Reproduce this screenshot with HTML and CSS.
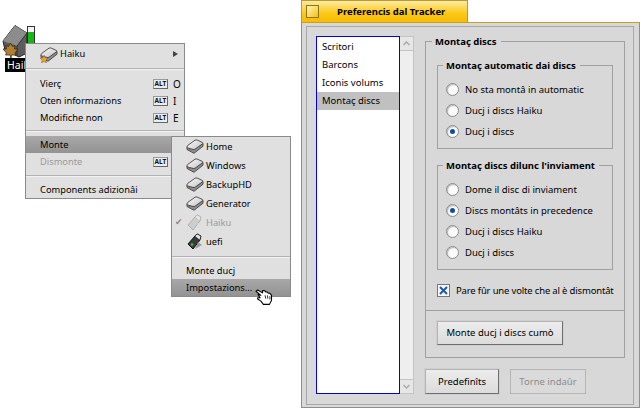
FILE: index.html
```html
<!DOCTYPE html>
<html lang="fur">
<head>
<meta charset="utf-8">
<title>Preferencis dal Tracker</title>
<link rel="stylesheet" href="styles.css">
</head>
<body>
<svg class="defs" width="0" height="0" aria-hidden="true">
  <defs>
    <linearGradient id="top" x1="0" y1="0" x2="1" y2="1"><stop offset="0" stop-color="#fafafa"/><stop offset="1" stop-color="#c4c4c4"/></linearGradient>
    <symbol id="disk" viewBox="0 0 18 15">
      <path d="M1 8 L1 10.500 L8 14.300 L17 7.200 L17 4.500 L8 10.500 Z" fill="#8e8e8e" stroke="#444" stroke-width=".9" stroke-linejoin="round"/>
      <path d="M1 8 Q1 6.800 2 6.200 L9 1.200 Q10 .7 11 1 L16.500 3.500 Q17.300 4 16.500 4.800 L9 10.200 Q8 10.800 7 10.400 L1.500 9 Z" fill="url(#top)" stroke="#444" stroke-width=".9" stroke-linejoin="round"/>
      <path d="M2.500 10 L4 10.800" stroke="#d8503a" stroke-width="1"/>
    </symbol>
  </defs>
</svg>

<div class="desk-icon">
  <svg class="vol-icon" width="40" height="36" viewBox="0 24 40 36" aria-hidden="true">
    <rect x="27.500" y="26.500" width="7" height="24" fill="#14b814" stroke="#333"/>
    <rect x="28" y="27" width="6" height="5" fill="#f4f4f4"/>
    <path d="M3 41 L15 25.500 L27 33 L27 53 L19 57 L5 50 Z" fill="#5c5c5c" stroke="#222" stroke-linejoin="round"/>
    <path d="M3 41 L15 25.500 L27 33 L17 46 Z" fill="#8c8c8c"/>
    <path d="M17 46 L27 33 M17 46 L17 56" stroke="#333" fill="none"/>
    <path d="M10.500 43 L12.500 46.500 L15 45.500 L14.500 49 L18 49 L15 53 L16 55 L11.500 55 L11 58 L10 55 L5.500 55 L6.500 53 L3 49 L6.500 49 L6 45.500 L8.500 46.500 Z" fill="#b08030" stroke="#2a2012" stroke-width=".7"/>
  </svg>
  <span class="vol-label">Haiku</span>
</div>

<nav class="menu main-menu">
  <div class="item head">
    <svg class="ico" width="18" height="15"><use href="#disk"/></svg>
    <svg class="leaf" width="8" height="8" viewBox="0 0 8 8" aria-hidden="true"><path d="M4 0 L5 2.500 L8 3 L6 5 L6.500 8 L4 6.500 L1.500 8 L2 5 L0 3 L3 2.500 Z" fill="#e5a52a" stroke="#644" stroke-width=".4"/></svg>
    <span class="grow">Haiku</span>
    <span class="arrow"></span>
  </div>
  <hr class="rule-a">
  <div class="item"><span class="grow">Vierç</span><span class="alt">ALT</span><span class="key">O</span></div>
  <div class="item"><span class="grow">Oten informazions</span><span class="alt">ALT</span><span class="key">I</span></div>
  <div class="item"><span class="grow">Modifiche non</span><span class="alt">ALT</span><span class="key">E</span></div>
  <hr class="rule-b">
  <div class="item sel"><span class="grow">Monte</span></div>
  <div class="item off"><span class="grow">Dismonte</span><span class="alt">ALT</span><span class="key">U</span></div>
  <hr class="rule-c">
  <div class="item"><span class="grow">Components adizionâi</span></div>
</nav>

<nav class="menu sub-menu">
  <div class="sub"><svg class="ico" width="18" height="15"><use href="#disk"/></svg>Home</div>
  <div class="sub"><svg class="ico" width="18" height="15"><use href="#disk"/></svg>Windows</div>
  <div class="sub"><svg class="ico" width="18" height="15"><use href="#disk"/></svg>BackupHD</div>
  <div class="sub"><svg class="ico" width="18" height="15"><use href="#disk"/></svg>Generator</div>
  <div class="sub off">
    <span class="check">✔</span>
    <svg class="ico" width="18" height="17" viewBox="0 0 18 17" aria-hidden="true"><path d="M2 11 L9 3 L14 7 L7 16 Z" fill="#cdcdcd" stroke="#b0b0b0"/><path d="M9 3 L11 .8 L15 3 L14 7" fill="#e6e6e6" stroke="#b0b0b0"/><path d="M12 9 L16 12 L9 16" fill="#dedede"/></svg>Haiku
  </div>
  <div class="sub">
    <svg class="ico" width="18" height="17" viewBox="0 0 18 17" aria-hidden="true"><path d="M2 11 L9 3 L14 7 L7 16 Z" fill="#3a3a3a" stroke="#111"/><path d="M9 3 L11 .8 L15 3 L14 7" fill="#e4e4e4" stroke="#222"/><path d="M12 9 L16 12 L9 16" fill="#9a9a9a"/><circle cx="6" cy="11.500" r="1.300" fill="#3c3"/></svg>uefi
  </div>
  <hr class="rule-d">
  <div class="sub plain">Monte ducj</div>
  <div class="sub plain sel">Impostazions...</div>
</nav>

<svg class="cursor" width="20" height="18" viewBox="0 0 24 22" aria-hidden="true">
  <path d="M1 4 L3 2.500 L9 6 L9 3 L12 3.500 L13 5 L15 5 L16 6.500 L18 6.500 L20 9 L20 15 L17.500 20 L10 20 L7 16 L3 13.500 L3 12 L6 12 L3.500 8 L7 9 Z" fill="#fff" stroke="#000" stroke-width="1.300" stroke-linejoin="round"/>
  <path d="M12 9 L13 13 M15 9 L15.500 13 M18 10 L18 14" stroke="#000"/>
</svg>

<section class="window">
  <header class="tab">
    <span class="close"></span>
    <span class="title">Preferencis dal Tracker</span>
  </header>
  <div class="frame">
    <div class="body">
      <div class="list-wrap">
        <ul class="list">
          <li>Scritori</li>
          <li>Barcons</li>
          <li>Iconis volums</li>
          <li class="cur">Montaç discs</li>
        </ul>
        <div class="scroll">
          <span class="sb-btn up"><svg width="7" height="5" viewBox="0 0 7 5"><path d="M0.500 4 L3.500 1 L6.500 4" fill="none" stroke="#aaa" stroke-width="1.500"/></svg></span>
          <span class="sb-btn down"><svg width="7" height="5" viewBox="0 0 7 5"><path d="M0.500 1 L3.500 4 L6.500 1" fill="none" stroke="#aaa" stroke-width="1.500"/></svg></span>
        </div>
      </div>
      <div class="right">
        <div class="outer">
          <h2 class="legend l-outer">Montaç discs</h2>
          <div class="group g1">
            <h3 class="legend l-inner">Montaç automatic dai discs</h3>
            <div class="radio"><i></i>No sta montâ in automatic</div>
            <div class="radio"><i></i>Ducj i discs Haiku</div>
            <div class="radio on"><i></i>Ducj i discs</div>
          </div>
          <div class="group g2">
            <h3 class="legend l-inner">Montaç discs dilunc l'inviament</h3>
            <div class="radio"><i></i>Dome il disc di inviament</div>
            <div class="radio on"><i></i>Discs montâts in precedence</div>
            <div class="radio"><i></i>Ducj i discs Haiku</div>
            <div class="radio"><i></i>Ducj i discs</div>
          </div>
          <div class="checkbox">
            <svg class="box" width="13" height="13" viewBox="0 0 13 13" aria-hidden="true"><rect x=".5" y=".5" width="12" height="12" fill="#f6f6f6" stroke="#777"/><path d="M3 3 L10 10 M10 3 L3 10" stroke="#1d5aa8" stroke-width="2"/></svg>
            <span class="check-label">Pare fûr une volte che al è dismontât</span>
          </div>
          <div class="sep"></div>
          <div class="btn mount">Monte ducj i discs cumò</div>
        </div>
        <div class="actions">
          <div class="btn def">Predefinîts</div>
          <div class="btn dis">Torne indaûr</div>
        </div>
      </div>
    </div>
  </div>
</section>
</body>
</html>
```
FILE: styles.css
```css
* { box-sizing: border-box; }
html, body { margin: 0; height: 409px; overflow: hidden; }
body {
  position: relative;
  width: 640px;
  background: #fff;
  font-family: "Noto Sans", sans-serif;
  font-size: 9.500px;
  line-height: 14px;
  color: #000;
}
.defs { position: absolute; }

/* Desktop icon */
.desk-icon { position: absolute; left: 0; top: 24px; width: 40px; height: 48px; }
.vol-icon { display: block; }
.vol-label {
  position: absolute; left: 5px; top: 34px;
  height: 14px; width: 36px; padding-left: 2px;
  background: #000; color: #fff; font-size: 10.500px;
}

/* Menus */
.menu {
  position: absolute;
  background: #e0e0e0;
  border: 1px solid #8a8a8a;
  font-size: 9.300px;
}
.main-menu { left: 25px; top: 43px; width: 160px; height: 156px; }
.sub-menu { left: 171px; top: 136px; width: 120px; height: 161px; z-index: 2; }
.menu hr { border: 0; height: 2px; background: linear-gradient(#b2b2b2 50%, #f2f2f2 50%); }
.rule-a { margin: 4px 0 5px; }
.rule-b { margin: 4px 0; }
.rule-c { margin: 5px 0 4px; }
.rule-d { margin: 5px 0 4px; }
.item {
  display: flex; align-items: center;
  height: 17px; padding: 0 4px 0 14px;
}
.item.head { height: 20px; position: relative; }
.item.head .ico { margin-right: 2px; }
.leaf { position: absolute; left: 14px; top: 11px; }
.grow { flex: 1; }
.sel { background: linear-gradient(#a8a8a8, #939393); }
.off { color: #9a9a9a; }
.alt {
  width: 15px; height: 10px; margin-right: 5px;
  background: #ececec; border: 1px solid #9a9a9a;
  border-right-color: #666; border-bottom-color: #666;
  color: #111;
  font-size: 6.500px; line-height: 8px; text-align: center; font-weight: 700;
}
.key { width: 7px; font-size: 10px; }
.arrow {
  width: 0; height: 0; margin-right: 2px;
  border-left: 5px solid #444;
  border-top: 3.500px solid transparent; border-bottom: 3.500px solid transparent;
}
.ico { flex: none; }
.sub {
  display: flex; align-items: center; gap: 2px;
  height: 19px; padding-left: 14px; position: relative;
}
.sub.plain { height: 17px; }
.check { position: absolute; left: 3px; top: 2px; font-size: 9px; color: #888; font-family: "DejaVu Sans", sans-serif; }

.cursor { position: absolute; left: 255px; top: 288px; z-index: 3; }

/* Window */
.window { position: absolute; left: 301px; top: 0; width: 339px; height: 408px; }
.tab {
  display: flex; align-items: center;
  width: 167px; height: 22px; padding-left: 4px;
  background: linear-gradient(#fdeaa0, #fcc814 60%, #f6bb05);
  border: 1px solid #b59a3c; border-bottom: 0;
}
.close {
  width: 13px; height: 13px;
  background: linear-gradient(135deg, #fff3b8, #f4c210);
  border: 1px solid #8c7420;
}
.title { margin-left: 18px; font-weight: 700; white-space: nowrap; }
.frame {
  height: 386px;
  padding: 3px 5px 2px 4px;
  background: #d8d8d8;
  border: 1px solid #8e8e8e;
  border-top-color: #c8a020;
}
.body {
  display: flex;
  height: 100%;
  padding: 9px 8px 0 9px;
  background: #d8d8d8;
  border: 1px solid #a8a8a8;
}
.list-wrap { display: flex; width: 98px; height: 358px; }
.list {
  width: 84px; height: 358px; margin: 0; padding: 1px 0 0;
  list-style: none; background: #fff; border: 1px solid #0000e6;
}
.list li { height: 18px; padding-left: 5px; line-height: 18px; }
.list li.cur { background: #c0c0c0; }
.scroll {
  width: 14px; height: 358px;
  display: flex; flex-direction: column; justify-content: space-between;
  background: #eeeeee; border: 1px solid #c4c4c4; border-left: 0;
}
.sb-btn {
  display: flex; align-items: center; justify-content: center;
  height: 14px; background: #e6e6e6;
}
.sb-btn.up { border-bottom: 1px solid #c4c4c4; }
.sb-btn.down { border-top: 1px solid #c4c4c4; }
.right { margin-left: 11px; width: 200px; }
.outer {
  position: relative;
  height: 317px; margin-top: 5px;
  padding: 23px 11px 0;
  border: 1px solid #a0a0a0;
}
.legend {
  position: absolute; margin: 0; padding: 0 4px 0 3px;
  background: #d8d8d8; font-size: 9.500px; font-weight: 700; line-height: 14px;
  white-space: nowrap;
}
.l-outer { left: 6px; top: -7px; }
.l-inner { left: 5px; top: -7px; }
.group { position: relative; border: 1px solid #a0a0a0; width: 176px; }
.g1 { height: 84px; padding-top: 13px; }
.g2 { height: 105px; margin-top: 16px; padding-top: 13px; }
.radio { display: flex; align-items: center; gap: 6px; height: 21px; padding-left: 8px; white-space: nowrap; }
.radio i {
  flex: none;
  width: 13px; height: 13px; border-radius: 50%;
  background: #fbfbfb; border: 1px solid #8a8a8a; position: relative;
  box-shadow: inset 1px 1px 1px #bbb;
}
.radio.on i::after {
  content: ""; position: absolute; left: 3px; top: 3px;
  width: 5px; height: 5px; border-radius: 50%; background: #124c9c;
}
.checkbox { display: flex; align-items: center; gap: 6px; height: 13px; margin-top: 14px; white-space: nowrap; }
.check-label { letter-spacing: -0.170px; }
.box { flex: none; }
.sep { height: 1px; background: #a0a0a0; margin: 13px -11px 0; }
.btn {
  display: flex; align-items: center; justify-content: center;
  background: linear-gradient(#ececec, #dcdcdc);
  border: 1px solid #6e6e6e;
  border-top-color: #b4b4b4; border-left-color: #b4b4b4;
  box-shadow: 0 0 0 1px #cfcfcf;
}
.mount { width: 126px; height: 24px; margin-top: 10px; }
.actions { display: flex; gap: 11px; margin-top: 11px; }
.def { width: 74px; height: 25px; }
.dis { width: 76px; height: 25px; color: #8c8c8c; background: #dadada; border-color: #b4b4b4; box-shadow: none; }
```
